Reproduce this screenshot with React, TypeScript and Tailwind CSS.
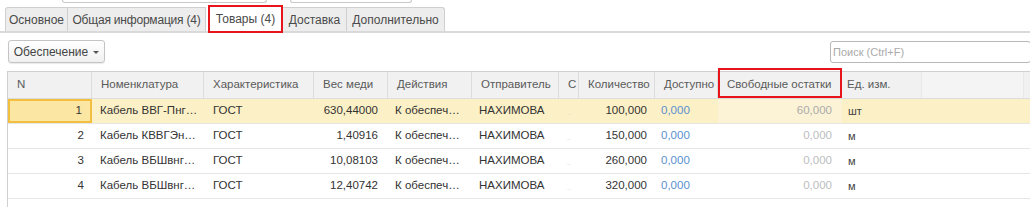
import React from 'react';

type Row = {
  n: number;
  name: string;
  weight: string;
  qty: string;
  free: string;
  unit: string;
};

const rows: Row[] = [
  { n: 1, name: 'Кабель ВВГ-Пнг…', weight: '630,44000', qty: '100,000', free: '60,000', unit: 'шт' },
  { n: 2, name: 'Кабель КВВГЭн…', weight: '1,40916', qty: '150,000', free: '0,000', unit: 'м' },
  { n: 3, name: 'Кабель ВБШвнг…', weight: '10,08103', qty: '260,000', free: '0,000', unit: 'м' },
  { n: 4, name: 'Кабель ВБШвнг…', weight: '12,40742', qty: '320,000', free: '0,000', unit: 'м' },
];

const cols = 'grid grid-cols-[84px_112px_110px_74px_84px_87px_20px_76px_63px_124px_182px]';

const HeadCell = ({ children, last }: { children?: React.ReactNode; last?: boolean }) => (
  <div className={`flex items-center pl-[9px] ${last ? '' : 'border-r border-[#dcdcdc]'}`}>{children}</div>
);

export default function App() {
  return (
    <div className="w-[1030px] h-[207px] bg-white overflow-hidden text-[11.5px] text-[#333]" style={{ fontFamily: '"Liberation Sans", Arial, sans-serif' }}>
      {/* cut-off fields above */}
      <div className="flex h-[5px] pl-[62px] gap-[23px]">
        <div className="w-[205px] h-[3px] border-x border-b border-[#c8c8c8] rounded-b-[3px]" />
        <div className="w-[122px] h-[3px] border-x border-b border-[#c8c8c8] rounded-b-[3px]" />
      </div>

      {/* tabs */}
      <div className="flex items-end h-[28px] pl-[5px] border-b-2 border-[#d9d9d9] text-[#4a4a4a] text-[12px]">
        <div className="w-[63px] h-[24px] flex items-center justify-center bg-[#ededed] border border-b-0 border-[#cfcfcf] rounded-tl-[3px]">Основное</div>
        <div className="w-[138px] h-[24px] flex items-center justify-center bg-[#ededed] border border-l-0 border-b-0 border-[#cfcfcf] tracking-[-0.2px]">Общая информация (4)</div>
        <div className="relative z-10 -mb-[2px] ml-[2px] w-[75px] h-[28px] flex items-center justify-center bg-white border-2 border-[#e8141c]">Товары (4)</div>
        <div className="w-[64px] h-[24px] flex items-center justify-center bg-[#ededed] border border-l-0 border-b-0 border-[#cfcfcf]">Доставка</div>
        <div className="w-[98px] h-[24px] flex items-center justify-center bg-[#ededed] border border-l-0 border-b-0 border-[#cfcfcf] rounded-tr-[3px]">Дополнительно</div>
      </div>

      {/* toolbar */}
      <div className="flex justify-between items-start mt-[7px] pl-[8px]">
        <div className="w-[97px] h-[23px] flex items-center justify-center gap-[5px] rounded-[3px] border border-[#c4c4c4] bg-gradient-to-b from-white to-[#f0f0f0] text-[#444] text-[12px] shadow-[0_1px_1px_rgba(0,0,0,0.08)]">
          <span>Обеспечение</span>
          <span className="w-0 h-0 border-l-[3px] border-r-[3px] border-t-[3px] border-l-transparent border-r-transparent border-t-[#555] mt-[1px]" />
        </div>
        <div className="w-[201px] h-[22px] mt-[1px] -mr-[1px] flex items-center pl-[2px] border border-[#b8b8b8] rounded-[3px] text-[11px] text-[#aaa]">Поиск (Ctrl+F)</div>
      </div>

      {/* table */}
      <div className="ml-[7px] mt-[8px] border-l border-t border-[#d0d0d0] h-[200px]">
        <div className={`${cols} h-[27px] bg-[#f1f1f1] border-b border-[#dcdcdc] text-[#5a5a5a]`}>
          <HeadCell>N</HeadCell>
          <HeadCell>Номенклатура</HeadCell>
          <HeadCell>Характеристика</HeadCell>
          <HeadCell>Вес меди</HeadCell>
          <HeadCell>Действия</HeadCell>
          <HeadCell>Отправитель</HeadCell>
          <HeadCell>С</HeadCell>
          <HeadCell>Количество</HeadCell>
          <HeadCell>Доступно</HeadCell>
          <div className="relative flex items-center pl-[9px] border-r border-[#dcdcdc]">
            Свободные остатки
            <div className="absolute -top-[4px] left-0 -right-[1px] bottom-0 border-2 border-[#e8141c]" />
          </div>
          <div className="flex">
            <div className="w-[80px] flex items-center pl-[5px]">Ед. изм.</div>
            <div className="flex-1" />
            <div className="w-[105px] border-x border-[#e8e8e8] bg-[#f4f4f4]" />
          </div>
        </div>

        {rows.map((r, i) => {
          const sel = i === 0;
          return (
            <div key={r.n} className={`${cols} h-[25px] border-b border-[#e6e6e6] ${sel ? 'bg-[#fcf0c6]' : 'bg-white'}`}>
              <div className={`flex items-center justify-end pr-[8px] ${sel ? 'bg-[#fbe6a3] border-2 border-[#f2bf3e]' : ''}`}>{r.n}</div>
              <div className="flex items-center pl-[8px] whitespace-nowrap">{r.name}</div>
              <div className="flex items-center pl-[9px]">ГОСТ</div>
              <div className="flex items-center justify-end pr-[10px]">{r.weight}</div>
              <div className="flex items-center pl-[7px] whitespace-nowrap">К обеспеч…</div>
              <div className="flex items-center pl-[7px]">НАХИМОВА</div>
              <div className="flex items-center justify-center text-[7px] text-[#d4d4d4] pt-[4px]">..</div>
              <div className="flex items-center justify-end pr-[8px]">{r.qty}</div>
              <div className="flex items-center pl-[6px] text-[#5a8fd0]">0,000</div>
              <div className={`flex items-center justify-end pr-[10px] ${sel ? 'text-[#ababab] bg-[#fcf3d6]' : 'text-[#bdbdbd]'}`}>{r.free}</div>
              <div className="flex items-center pl-[6px] text-[11px] text-[#444]">{r.unit}</div>
            </div>
          );
        })}
      </div>
    </div>
  );
}
